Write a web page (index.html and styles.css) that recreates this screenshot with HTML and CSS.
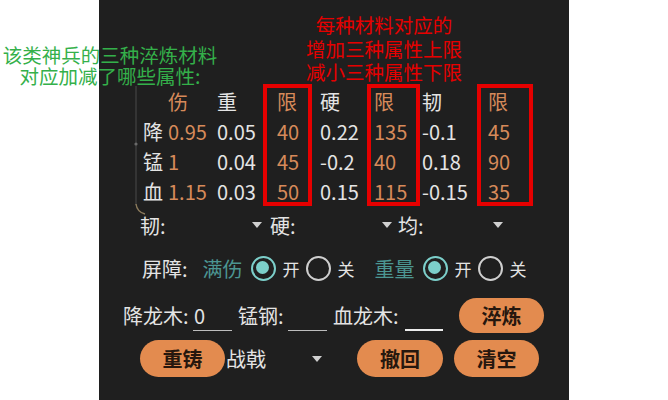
FILE: index.html
```html
<!DOCTYPE html>
<html lang="zh-CN">
<head>
<meta charset="utf-8">
<title>淬炼</title>
<link rel="stylesheet" href="styles.css">
</head>
<body>
<div class="page">
  <div class="panel">
    <svg class="rail" width="20" height="135" viewBox="0 0 20 135">
      <line x1="6" y1="0" x2="6" y2="119" stroke="#4a4a4a" stroke-width="1"/>
      <circle cx="6" cy="58" r="1.6" fill="#6a6a6a"/>
      <path d="M6 118 Q7 126 15 128" fill="none" stroke="#8c7b5c" stroke-width="1.4"/>
    </svg>
    <div class="table-wrap">
      <div class="stats">
        <span></span><span class="o">伤</span><span>重</span><span class="o">限</span><span>硬</span><span class="o">限</span><span>韧</span><span class="o">限</span>
        <span>降</span><span class="o">0.95</span><span>0.05</span><span class="o">40</span><span>0.22</span><span class="o">135</span><span>-0.1</span><span class="o">45</span>
        <span>锰</span><span class="o">1</span><span>0.04</span><span class="o">45</span><span>-0.2</span><span class="o">40</span><span>0.18</span><span class="o">90</span>
        <span>血</span><span class="o">1.15</span><span>0.03</span><span class="o">50</span><span>0.15</span><span class="o">115</span><span>-0.15</span><span class="o">35</span>
      </div>
      <div class="mark m1"></div>
      <div class="mark m2"></div>
      <div class="mark m3"></div>
    </div>

    <div class="selects">
      <div class="select s1"><span>韧:</span><i class="caret"></i></div>
      <div class="select s2"><span>硬:</span><i class="caret"></i></div>
      <div class="select s3"><span>均:</span><i class="caret"></i></div>
    </div>

    <div class="radios">
      <span class="lbl">屏障:</span>
      <div class="group">
        <span class="teal">满伤</span>
        <span class="opt"><i class="radio on"></i>开</span>
        <span class="opt"><i class="radio"></i>关</span>
      </div>
      <div class="group g2">
        <span class="teal">重量</span>
        <span class="opt"><i class="radio on"></i>开</span>
        <span class="opt"><i class="radio"></i>关</span>
      </div>
    </div>

    <div class="inputs">
      <span class="in-l l1">降龙木:</span><span class="field">0</span>
      <span class="in-l l2">锰钢:</span><span class="field"></span>
      <span class="in-l l3">血龙木:</span><span class="field active"></span>
      <button class="btn b-cui">淬炼</button>
    </div>

    <div class="actions">
      <button class="btn tall">重铸</button>
      <div class="select weapon"><span>战戟</span><i class="caret"></i></div>
      <button class="btn tall b-undo">撤回</button>
      <button class="btn tall b-clear">清空</button>
    </div>
  </div>

  <div class="note green">
    <div class="ln">该类神兵的三种淬炼材料</div>
    <div class="ln">对应加减了哪些属性:</div>
  </div>
  <div class="note red">
    <div class="ln">每种材料对应的</div>
    <div class="ln">增加三种属性上限</div>
    <div class="ln">减小三种属性下限</div>
  </div>
</div>
</body>
</html>
```

FILE: styles.css
```css
* { box-sizing: border-box; margin: 0; padding: 0; }
html, body { width: 668px; height: 400px; overflow: hidden; background: #ffffff; }
body { font-family: "Noto Sans CJK SC", "Noto Sans", sans-serif; }

.page { position: relative; width: 668px; height: 400px; }

.panel {
  position: relative;
  margin-left: 99px;
  width: 470px;
  height: 400px;
  background: #1f1f1f;
  color: #e4e4e4;
  font-size: 20px;
  padding-top: 87px;
}

.rail { position: absolute; left: 31px; top: 86px; }

.table-wrap { position: relative; margin-left: 44px; width: 390px; }
.stats {
  display: grid;
  grid-template-columns: 25px 49px 60px 43px 54px 48px 66px 40px;
  grid-auto-rows: 30px;
  line-height: 30px;
  white-space: nowrap;
}
.o { color: #d68a5a; }

.mark { position: absolute; top: -3px; height: 122px; border: 4px solid #e60000; }
.m1 { left: 120px; width: 49px; }
.m2 { left: 224px; width: 53px; }
.m3 { left: 334px; width: 56px; }

.selects { display: flex; align-items: center; height: 30px; margin: 3px 0 0 41px; }
.select { display: flex; align-items: center; justify-content: space-between; }
.s1 { width: 122px; margin-right: 8px; }
.s2 { width: 122px; margin-right: 6px; }
.s3 { width: 105px; }
.caret {
  display: block;
  width: 0; height: 0;
  border-left: 5px solid transparent;
  border-right: 5px solid transparent;
  border-top: 6px solid #d0d0d0;
}

.radios { display: flex; align-items: center; height: 30px; margin: 13px 0 0 43px; }
.lbl { margin-right: 15px; }
.group { display: flex; align-items: center; }
.g2 { margin-left: 14px; }
.teal { color: #4c9692; margin-right: 8px; }
.opt { display: flex; align-items: center; gap: 7px; margin-right: 6px; font-size: 17px; }
.radio {
  display: block;
  width: 25px; height: 25px;
  border: 2.5px solid #cfcfcf;
  border-radius: 50%;
  position: relative;
}
.radio.on { border-color: #7ccfca; }
.radio.on::after {
  content: "";
  position: absolute;
  left: 3.5px; top: 3.5px;
  width: 13px; height: 13px;
  border-radius: 50%;
  background: #7ccfca;
}

.inputs { display: flex; align-items: center; height: 35px; margin: 15px 0 0 24px; }
.in-l { white-space: nowrap; }
.l1 { width: 70px; }
.l2 { width: 50px; margin-left: 6px; }
.l3 { width: 72px; margin-left: 6px; }
.field {
  display: block;
  width: 39px; height: 30px;
  line-height: 30px;
  padding-left: 1px;
  border-bottom: 1.5px solid #bdbdbd;
}
.field.active { width: 38px; border-bottom: 2px solid #ececec; }
.btn {
  border: 0;
  font: inherit;
  font-weight: 700;
  font-size: 20px;
  color: #26170e;
  background: #e38b4f;
  width: 85px;
  height: 35px;
  border-radius: 18px;
  display: flex;
  align-items: center;
  justify-content: center;
}
.b-cui { margin-left: 16px; }

.actions { display: flex; align-items: center; height: 37px; margin: 7px 0 0 41px; }
.tall { height: 37px; border-radius: 19px; }
.weapon { width: 96px; margin-left: 1px; }
.b-undo { width: 86px; margin-left: 35px; }
.b-clear { margin-left: 11px; }

.note { position: absolute; font-size: 19.5px; text-align: center; white-space: nowrap; }
.green { left: 0; top: 44px; width: 220px; color: #34b04a; }
.green .ln { height: 21px; line-height: 21px; }
.red { left: 300px; top: 13px; width: 168px; color: #e60000; }
.red .ln { height: 23.5px; line-height: 23.5px; }
```
